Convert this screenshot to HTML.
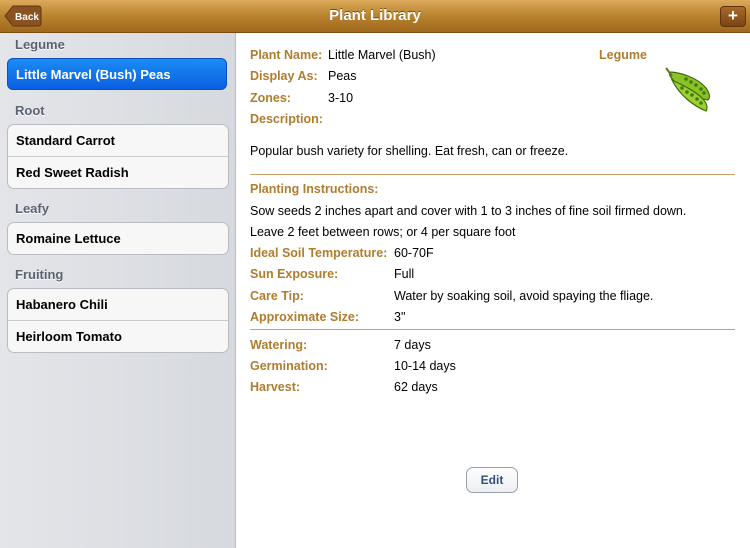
<!DOCTYPE html><html><head><style>
body{margin:0;width:750px;height:548px;overflow:hidden;font-family:"Liberation Sans",sans-serif;position:relative;background:#fff}
.a{position:absolute}
.nav{left:0;top:0;width:750px;height:32px;background:linear-gradient(#dcaa5a,#b8822f 50%,#a0681c);border-bottom:1px solid #7a4c12}
.side{left:0;top:33px;width:235px;height:515px;background:linear-gradient(90deg,#e3e5e9,#d6d9de);border-right:1px solid #b9bcc2}
.h{left:15px;font-size:13px;font-weight:bold;color:#5b6272;text-shadow:0 1px 0 #fff}
.g{left:7px;width:220px;background:#f7f7f7;border:1px solid #b9bcc2;border-radius:7px;overflow:hidden}
.c{height:31px;line-height:31px;padding-left:8px;font-size:13px;font-weight:bold;color:#000}
.c+.c{border-top:1px solid #c8cacf}
.l{font-size:12.5px;font-weight:bold;color:#b07d2e}
.v{font-size:12.5px;color:#000}
.hr{left:250px;width:485px;height:1px;background:#c8a068}
</style></head><body>
<div class="a nav"></div>
<svg class="a" style="left:4px;top:5px" width="38" height="22" viewBox="0 0 38 22"><path d="M1 11 L9 1 H34 Q37 1 37 4 V18 Q37 21 34 21 H9 Z" fill="#8a5220" stroke="#5f3510"/><text x="23" y="15" text-anchor="middle" font-family="Liberation Sans" font-size="10" font-weight="bold" fill="#fff">Back</text></svg>
<div class="a" style="left:0;top:7px;width:750px;text-align:center;color:#fff;font-weight:bold;font-size:15px;text-shadow:0 -1px 0 #7a4c12">Plant Library</div>
<div class="a" style="left:720px;top:6px;width:24px;height:19px;background:linear-gradient(#a96a2a,#7a4414);border:1px solid #5f3510;border-radius:4px;color:#fff;font-weight:bold;font-size:17px;line-height:18px;text-align:center">+</div>
<div class="a side"></div>
<div class="a h" style="top:37px">Legume</div>
<div class="a" style="left:7px;top:58px;width:220px;height:32px;border-radius:6px;background:linear-gradient(#1b8cf5,#0a5fe0);border:1px solid #0a50c0;box-sizing:border-box;color:#fff;font-weight:bold;font-size:13px;line-height:31px;padding-left:8px">Little Marvel (Bush) Peas</div>
<div class="a h" style="top:103px">Root</div>
<div class="a g" style="top:124px"><div class="c">Standard Carrot</div><div class="c">Red Sweet Radish</div></div>
<div class="a h" style="top:201px">Leafy</div>
<div class="a g" style="top:222px"><div class="c">Romaine Lettuce</div></div>
<div class="a h" style="top:267px">Fruiting</div>
<div class="a g" style="top:288px"><div class="c">Habanero Chili</div><div class="c">Heirloom Tomato</div></div>

<div class="a l" style="left:250px;top:48px">Plant Name:</div><div class="a v" style="left:328px;top:48px">Little Marvel (Bush)</div>
<div class="a l" style="left:599px;top:48px">Legume</div>
<div class="a l" style="left:250px;top:69px">Display As:</div><div class="a v" style="left:328px;top:69px">Peas</div>
<div class="a l" style="left:250px;top:91px">Zones:</div><div class="a v" style="left:328px;top:91px">3-10</div>
<div class="a l" style="left:250px;top:112px">Description:</div>
<div class="a v" style="left:250px;top:144px">Popular bush variety for shelling. Eat fresh, can or freeze.</div>
<div class="a hr" style="top:174px"></div>
<div class="a l" style="left:250px;top:182px">Planting Instructions:</div>
<div class="a v" style="left:250px;top:204px">Sow seeds 2 inches apart and cover with 1 to 3 inches of fine soil firmed down.</div>
<div class="a v" style="left:250px;top:225px">Leave 2 feet between rows; or 4 per square foot</div>
<div class="a l" style="left:250px;top:246px">Ideal Soil Temperature:</div><div class="a v" style="left:394px;top:246px">60-70F</div>
<div class="a l" style="left:250px;top:267px">Sun Exposure:</div><div class="a v" style="left:394px;top:267px">Full</div>
<div class="a l" style="left:250px;top:289px">Care Tip:</div><div class="a v" style="left:394px;top:289px">Water by soaking soil, avoid spaying the fliage.</div>
<div class="a l" style="left:250px;top:310px">Approximate Size:</div><div class="a v" style="left:394px;top:310px">3"</div>
<div class="a hr" style="top:329px"></div>
<div class="a l" style="left:250px;top:338px">Watering:</div><div class="a v" style="left:394px;top:338px">7 days</div>
<div class="a l" style="left:250px;top:359px">Germination:</div><div class="a v" style="left:394px;top:359px">10-14 days</div>
<div class="a l" style="left:250px;top:380px">Harvest:</div><div class="a v" style="left:394px;top:380px">62 days</div>

<svg class="a" style="left:664px;top:66px" width="50" height="48" viewBox="0 0 50 48">
<path d="M5 6 C16 6 34 12 42 22 C46 28 46 32 44 34 C32 32 14 22 6 10 Z" fill="#8cc226" stroke="#3d6b0a" stroke-width="1.2"/>
<g fill="#3f7a12"><circle cx="22" cy="13" r="1.8"/><circle cx="27" cy="16" r="1.8"/><circle cx="32" cy="19" r="1.8"/><circle cx="37" cy="23" r="1.8"/><circle cx="40" cy="27" r="1.8"/></g>
<path d="M8 14 C16 18 30 24 38 32 C43 37 44 42 42 45 C30 40 16 30 8 14 Z" fill="#9ccf30" stroke="#3d6b0a" stroke-width="1.2"/>
<g fill="#3f7a12"><circle cx="18" cy="22" r="1.8"/><circle cx="23" cy="26" r="1.8"/><circle cx="28" cy="29" r="1.8"/><circle cx="33" cy="33" r="1.8"/><circle cx="37" cy="37" r="1.8"/></g>
<path d="M2 2 L8 10" stroke="#5a7a20" stroke-width="2"/>
</svg>

<div class="a" style="left:466px;top:467px;width:52px;height:26px;border:1px solid #9aa0aa;border-radius:7px;background:linear-gradient(#fff,#eceef1);box-sizing:border-box;text-align:center;line-height:24px;font-size:12px;font-weight:bold;color:#2f4f7f">Edit</div>
</body></html>
